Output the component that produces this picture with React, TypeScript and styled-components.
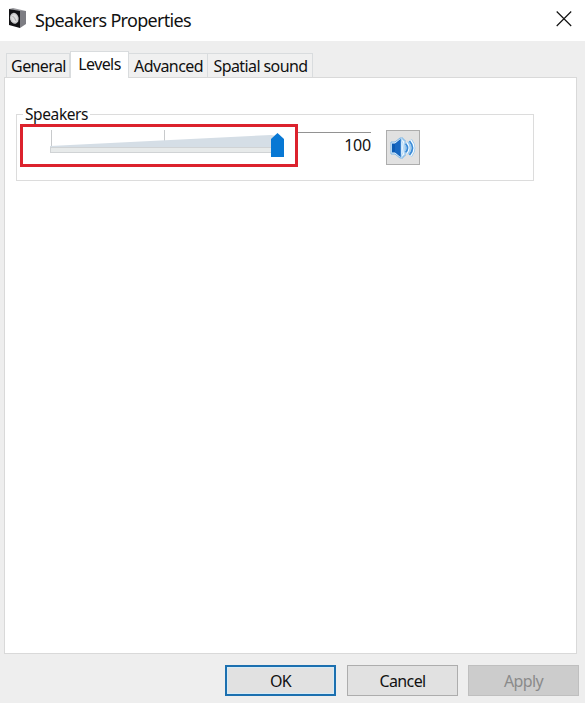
import React from "react";
import styled, { createGlobalStyle, css } from "styled-components";

const GlobalStyle = createGlobalStyle`
  * { box-sizing: border-box; }
  html, body { margin: 0; padding: 0; }
  body { font-family: "Noto Sans", "Open Sans", sans-serif; color: #111; overflow: hidden; }
`;

const Dialog = styled.div`
  width: 585px;
  height: 703px;
  background: #eeeeee;
  display: flex;
  flex-direction: column;
`;

const TitleBar = styled.header`
  height: 41px;
  flex: none;
  background: #fff;
  display: flex;
  align-items: center;
  padding: 0 13px 4px 8px;
`;

const Title = styled.h1`
  margin: 2px auto 0 8px;
  font-size: 18px;
  line-height: 24px;
  font-weight: 400;
  letter-spacing: -0.7px;
  white-space: nowrap;
`;

const CloseButton = styled.button`
  border: 0;
  padding: 0;
  background: none;
  display: flex;
`;

const Tabs = styled.nav`
  height: 36px;
  flex: none;
  padding: 0 6px;
  display: flex;
  align-items: flex-end;
`;

const Tab = styled.button<{ $width: number; $active?: boolean; $first?: boolean }>`
  width: ${(p) => p.$width}px;
  height: 24px;
  flex: none;
  padding: 0 0 0 1px;
  border: 1px solid #d9dcde;
  border-left-width: ${(p) => (p.$first ? 1 : 0)}px;
  border-bottom: 0;
  background: #f0f0f0;
  font: 400 16px/24px "Noto Sans", sans-serif;
  letter-spacing: -0.6px;
  color: #111;
  white-space: nowrap;
  display: flex;
  justify-content: center;
  ${(p) =>
    p.$active &&
    css`
      height: 27px;
      margin-bottom: -1px;
      padding: 0;
      border-left-width: 1px;
      background: #fff;
      position: relative;
    `}
`;

const Panel = styled.main`
  width: 573px;
  height: 577px;
  flex: none;
  margin-left: 4px;
  padding: 26px 0 0 11px;
  border: 1px solid #d9d9d9;
  background: #fff;
`;

const Group = styled.fieldset`
  width: 518px;
  height: 77px;
  margin: 0;
  padding: 0 0 0 3px;
  border: 1px solid #dcdcdc;
  display: flex;
  align-items: flex-start;
`;

const Legend = styled.legend`
  height: 20px;
  margin-left: 3px;
  padding: 0 2px;
  font-size: 15.5px;
  line-height: 20px;
  letter-spacing: -0.4px;
`;

const Highlight = styled.div`
  width: 278px;
  height: 43px;
  border: 3px solid #dc222d;
`;

const Value = styled.output`
  width: 73px;
  height: 30px;
  margin-top: 8px;
  border-top: 1px solid #929292;
  text-align: right;
  font-size: 16px;
  line-height: 24px;
  letter-spacing: -0.2px;
`;

const MuteButton = styled.button`
  width: 34px;
  height: 35px;
  margin: 6px 0 0 15px;
  padding: 0;
  border: 1px solid #adadad;
  background: #e1e1e1;
  display: flex;
  align-items: center;
  justify-content: center;
`;

const Actions = styled.footer`
  display: flex;
  padding: 11px 6px 0 225px;
`;

const ActionButton = styled.button<{ $kind?: "primary" | "disabled" }>`
  width: 111px;
  height: 31px;
  padding: 1px 0 0;
  border: 1px solid #adadad;
  background: #e1e1e1;
  color: #111;
  font: 400 16px/28px "Noto Sans", sans-serif;
  letter-spacing: -0.6px;
  & + & { margin-left: 11px; }
  &:last-child { margin-left: 10px; }
  ${(p) => p.$kind === "primary" && css`border: 2px solid #1c70b0; line-height: 26px;
    box-shadow: inset 0 0 0 1px #d5ebf7;`}
  ${(p) => p.$kind === "disabled" && css`border-color: #bfbfbf; background: #cccccc; color: #8a8a8a;`}
`;

const SpeakerBox = () => (
  <svg width="19" height="21" viewBox="0 0 19 21">
    <path d="M1 1 5 0 18 3 13 4Z" fill="#98989d" />
    <path d="M12 3 18 3V16L12 20Z" fill="#7d7d83" />
    <path d="M1 1 12 3V20L1 17Z" fill="#111114" />
    <ellipse cx="6.3" cy="10.3" rx="4.3" ry="5.5" transform="rotate(-14 6.3 10.3)" fill="#c4c4c6" />
    <ellipse cx="6.3" cy="10.3" rx="3" ry="4" transform="rotate(-14 6.3 10.3)" fill="#dedede" />
    <path d="m4.5 8 2 2 1.5 3" fill="none" stroke="#aaa" strokeWidth="1" />
  </svg>
);

const CloseIcon = () => (
  <svg width="16" height="16" viewBox="0 0 16 16">
    <path d="m.7.5 14.5 14.5M15.2.5.7 15" stroke="#111" strokeWidth="1.15" />
  </svg>
);

const VolumeSlider = () => (
  <svg width="272" height="37" viewBox="0 0 272 37" role="img" aria-label="Volume">
    <path d="M28.5 3v17M141.5 3v11" stroke="#c8cacc" />
    <path d="M27 19 248 8 254 9v11H27Z" fill="#d5dee6" />
    <rect x="27.5" y="20.5" width="227" height="5" fill="#e7eaea" stroke="#d0d3d5" />
    <path d="M248 12 254.5 6 261 12v18h-13Z" fill="#0878d4" />
  </svg>
);

const VolumeIcon = () => (
  <svg width="26" height="24" viewBox="0 0 26 24">
    <path d="M1 6h4l5-4h3v2h2v16h-2v2h-3l-5-4H1Z" fill="#edf7ff" stroke="#78b5e6" />
    <path d="M2 7.5h4v9H2Z" fill="#0c5cb4" />
    <path d="m5 7.5 6-5v19l-6-5Z" fill="#1768c2" />
    <path d="M11 3q5 9 0 18Z" fill="#e8f5ff" stroke="#91c4ec" strokeWidth=".6" />
    <path d="M16 7q4 5 0 10M20 4.5q6 7.5 0 15" fill="none" stroke="#8fc4ee" strokeWidth="4.6" />
    <path d="M16 7q4 5 0 10M20 4.5q6 7.5 0 15" fill="none" stroke="#f5fbff" strokeWidth="3.2" />
    <path d="M15.5 7.5q4 4.5 0 9M19.5 5q6 7 0 14" fill="none" stroke="#3a8bd8" strokeWidth="1.8" />
  </svg>
);

export default function App() {
  return (
    <>
      <GlobalStyle />
      <Dialog>
        <TitleBar>
          <SpeakerBox />
          <Title>Speakers Properties</Title>
          <CloseButton aria-label="Close"><CloseIcon /></CloseButton>
        </TitleBar>
        <Tabs>
          <Tab $width={64} $first>General</Tab>
          <Tab $width={59} $active>Levels</Tab>
          <Tab $width={79}>Advanced</Tab>
          <Tab $width={105}>Spatial sound</Tab>
        </Tabs>
        <Panel>
          <Group>
            <Legend>Speakers</Legend>
            <Highlight><VolumeSlider /></Highlight>
            <Value>100</Value>
            <MuteButton aria-label="Mute"><VolumeIcon /></MuteButton>
          </Group>
        </Panel>
        <Actions>
          <ActionButton $kind="primary">OK</ActionButton>
          <ActionButton>Cancel</ActionButton>
          <ActionButton $kind="disabled" disabled>Apply</ActionButton>
        </Actions>
      </Dialog>
    </>
  );
}
